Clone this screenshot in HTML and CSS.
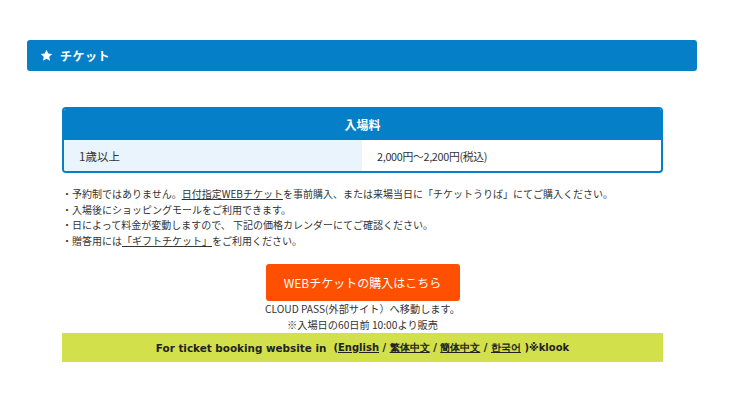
FILE: index.html
```html
<!DOCTYPE html>
<html lang="ja">
<head>
<meta charset="utf-8">
<link rel="stylesheet" href="styles.css">
</head>
<body>
<div class="page">
  <div class="title-bar">
    <svg class="star" viewBox="0 0 24 24" width="13" height="13"><path d="M12 1.5l3.2 6.8 7.3.9-5.4 5 1.4 7.3L12 17.9l-6.5 3.6 1.4-7.3-5.4-5 7.3-.9z" fill="#fff"/></svg>
    <span class="title">チケット</span>
  </div>
  <div class="content">
    <div class="price-table">
      <div class="pt-head">入場料</div>
      <div class="pt-row">
        <div class="pt-label">1歳以上</div>
        <div class="pt-value">2,000円～2,200円(税込)</div>
      </div>
    </div>
    <ul class="notes">
      <li>・予約制ではありません。<a class="link">日付指定WEBチケット</a>を事前購入、または来場当日に「チケットうりば」にてご購入ください。</li>
      <li>・入場後にショッピングモールをご利用できます。</li>
      <li>・日によって料金が変動しますので、 下記の価格カレンダーにてご確認ください。</li>
      <li>・贈答用には<a class="link">「ギフトチケット」</a>をご利用ください。</li>
    </ul>
    <div class="buy">
      <a class="buy-btn">WEBチケットの購入はこちら</a>
      <p class="buy-note">CLOUD PASS(外部サイト）へ移動します。</p>
      <p class="buy-note">※入場日の60日前 10:00より販売</p>
    </div>
    <div class="lang-bar"><span class="lead">For ticket booking website in</span><span class="paren">(<a class="link">English</a> / <a class="link">繁体中文</a> / <a class="link">簡体中文</a> / <a class="link">한국어</a> )※klook</span></div>
  </div>
</div>
</body>
</html>
```
FILE: styles.css
```css
* { box-sizing: border-box; }
html, body { margin: 0; padding: 0; background: #fff; }
body {
  font-family: "Noto Sans CJK JP", "Noto Sans", sans-serif;
  color: #333;
  width: 740px;
  height: 416px;
  overflow: hidden;
}
.page { padding: 40px 43px 0 27px; }
.title-bar {
  height: 31px;
  background: #0580c8;
  border-radius: 3px;
  display: flex;
  align-items: center;
  padding-left: 13px;
  color: #fff;
}
.star { margin-right: 7px; }
.title { font-size: 12px; font-weight: 700; letter-spacing: 0.5px; }
.content { margin: 36px 34px 0 35px; }
.price-table {
  border: 2px solid #0580c8;
  border-radius: 4px;
  overflow: hidden;
}
.pt-head {
  background: #0580c8;
  color: #fff;
  height: 31px;
  display: flex;
  align-items: center;
  justify-content: center;
  font-size: 12px;
  font-weight: 700;
}
.pt-row { display: flex; height: 31px; font-size: 11.5px; color: #333; }
.pt-label {
  width: 298px;
  background: #e9f4fc;
  display: flex;
  align-items: center;
  padding-left: 15px;
}
.pt-value {
  flex: 1;
  display: flex;
  align-items: center;
  padding-left: 15px;
  font-size: 10.8px;
  letter-spacing: -0.3px;
}
.notes {
  list-style: none;
  margin: 13px 0 0 0;
  padding: 0;
  font-size: 10px;
  line-height: 15.6px;
  color: #333;
}
.link { color: #333; text-decoration: underline; }
.buy {
  margin-top: 16px;
  display: flex;
  flex-direction: column;
  align-items: center;
}
.buy-btn {
  width: 194px;
  height: 37px;
  background: #ff4f00;
  border-radius: 3px;
  color: #fff;
  font-size: 12px;
  display: flex;
  align-items: center;
  justify-content: center;
  text-decoration: none;
}
.buy-note {
  margin: 0;
  font-size: 10.2px;
  line-height: 16px;
  color: #333;
}
.lang-bar {
  height: 29px;
  background: #d2e04c;
  display: flex;
  align-items: center;
  justify-content: center;
  font-family: "DejaVu Sans", sans-serif;
  font-weight: 700;
  color: #222;
  white-space: pre;
}
.lead { font-size: 10.4px; }
.paren { font-size: 10px; margin-left: 7px; }
.lang-bar .link { color: #222; }
```
